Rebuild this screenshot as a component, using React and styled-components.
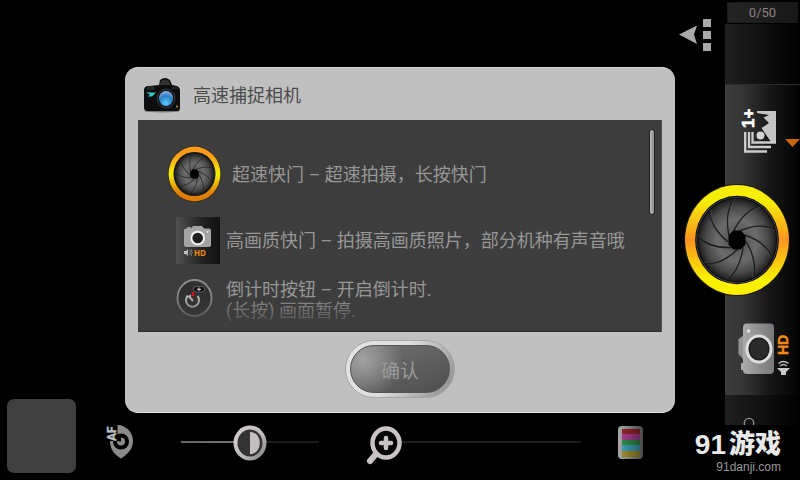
import React, { useState } from "react";
import styled, { createGlobalStyle } from "styled-components";

const GlobalStyle = createGlobalStyle`
  * {
    box-sizing: border-box;
  }

  body {
    margin: 0;
    background: #000;
    font-family: Roboto, "Noto Sans CJK SC", sans-serif;
  }

  svg {
    display: block;
  }
`;

const Page = styled.div`
  position: relative;
  display: flex;
  min-height: 100vh;
  background: #000;
  overflow: hidden;
`;

const Preview = styled.main`
  display: flex;
  flex: 1;
  flex-direction: column;
  justify-content: space-between;
  min-width: 0;
`;

const TopBar = styled.header`
  display: flex;
  justify-content: flex-end;
  padding: 18px 13px;
`;

const IconButton = styled.button`
  flex: none;
  padding: 0;
  border: 0;
  background: none;
  cursor: pointer;
`;

const BottomBar = styled.footer`
  display: flex;
  align-items: center;
  gap: 29px;
  padding: 0 82px 7px 7px;
`;

const Thumbnail = styled.button`
  flex: none;
  width: 69px;
  height: 74px;
  padding: 0;
  border: 0;
  border-radius: 7px;
  background: #404040;
`;

const Controls = styled.div`
  display: flex;
  flex: 1;
  align-items: center;
  gap: 48px;
  margin-top: 12px;
`;

const ZoomGroup = styled.div`
  display: flex;
  flex: 1;
  align-items: center;
  gap: 37px;
`;

const SliderBox = styled.div`
  position: relative;
  display: flex;
  align-items: center;
  flex: ${({ $fill }) => ($fill ? "1" : "0 1 138px")};
  height: 38px;

  svg {
    position: absolute;
    top: 0;
    transform: ${({ $fill }) => ($fill ? "none" : "translateX(-50%)")};
    pointer-events: none;
  }
`;

const Range = styled.input`
  appearance: none;
  width: 100%;
  height: 2px;
  margin: 0;
  background: ${({ $track }) => $track};

  &::-webkit-slider-thumb {
    appearance: none;
    width: 34px;
    height: 34px;
    background: transparent;
  }
`;

const Sidebar = styled.aside`
  display: flex;
  flex-direction: column;
  flex: none;
  width: 75px;
  padding-bottom: 55px;
`;

const Counter = styled.div`
  height: 21px;
  margin: 2px 2px 1px;
  border: 1px solid #1a1a1a;
  background: linear-gradient(90deg, #242424, #181818);
  color: #8d7f80;
  font-size: 13px;
  line-height: 19px;
  text-align: center;
`;

const Slot = styled.div`
  height: ${({ $height }) => $height}px;
  background: linear-gradient(90deg, #202020, #080808 75%, #000);
`;

const Tools = styled.div`
  display: flex;
  flex: 1;
  flex-direction: column;
  justify-content: center;
  gap: 27px;
  border-top: 1px solid #2c2c2c;
  background: linear-gradient(90deg, #3c3c3c, #353535 25%, #161616 60%, #0a0a0a 85%, #000);
`;

const ShutterButton = styled(IconButton)`
  width: 106px;
  margin-left: -41px;
`;

const Overlay = styled.div`
  position: absolute;
  inset: 0;
  display: flex;
  align-items: center;
  justify-content: center;
  padding: 0 16px;
  pointer-events: none;
`;

const DialogCard = styled.section`
  width: 100%;
  max-width: 550px;
  padding: 0 13px;
  border-top: 1px solid #d2d2d2;
  border-bottom: 1px solid #e0e0e0;
  border-radius: 13px;
  background: #c0c0c0;
  pointer-events: auto;
`;

const DialogHeader = styled.header`
  display: flex;
  align-items: center;
  gap: 12px;
  height: 52px;
  padding: 2px 5px 0;
`;

const Title = styled.h2`
  margin: 0;
  color: #4b4b4b;
  font-size: 18px;
  font-weight: 400;
  line-height: 21px;
`;

const DialogContent = styled.div`
  position: relative;
  display: flex;
  flex-direction: column;
  gap: 15px;
  padding: 26px 30px 10px;
  border-right: 1px solid #555;
  border-bottom: 1px solid #2c2c2c;
  background: #3d3d3d;
`;

const HelpRow = styled.div`
  display: flex;
  align-items: ${({ $top }) => ($top ? "flex-start" : "center")};
  gap: ${({ $large }) => ($large ? "11px" : "6px")};
  padding-left: ${({ $large }) => ($large ? "0" : "8px")};
`;

const HelpIcon = styled.div`
  flex: none;
  width: ${({ $large }) => ($large ? "53px" : "44px")};
`;

const HelpText = styled.p`
  margin: 0;
  color: #979797;
  font-size: 18px;
  font-weight: 400;
  line-height: 21px;
`;

const Fade = styled.div`
  position: absolute;
  right: 0;
  bottom: 0;
  left: 0;
  height: 36px;
  background: linear-gradient(rgba(61, 61, 61, 0), #3d3d3d);
`;

const ScrollThumb = styled.div`
  position: absolute;
  top: 9px;
  right: 6px;
  width: 6px;
  height: 86px;
  border: 1px solid #222;
  border-radius: 3px;
  background: linear-gradient(90deg, #bbb, #8c8c8c);
`;

const DialogFooter = styled.footer`
  display: flex;
  justify-content: center;
  padding: 8px 0 14px;
`;

const ConfirmRim = styled.div`
  padding: 4px;
  border: 1px solid #a6a6a6;
  border-radius: 29px;
  background: linear-gradient(120deg, #e4e4e4, #dedede 45%, #8a8a8a);
`;

const ConfirmButton = styled.button`
  display: block;
  width: 100px;
  height: 48px;
  padding: 0;
  border: 1px solid #555;
  border-radius: 24px;
  background: radial-gradient(circle at 12px 14px, #a2a2a2, rgba(120, 120, 120, 0) 40px),
    linear-gradient(160deg, #717171, #4e4e4e);
  color: #9a9a9a;
  font-family: inherit;
  font-size: 19px;
  font-weight: 400;
  cursor: pointer;
`;

const Watermark = styled.div`
  position: absolute;
  right: 19px;
  bottom: 6px;
  display: flex;
  flex-direction: column;
  align-items: flex-end;
  color: #e9e9e9;
`;

const Brand = styled.div`
  display: flex;
  align-items: center;
  gap: 3px;
  font-size: 26px;
  font-weight: 900;
  line-height: 31px;
`;

const BrandNumber = styled.span`
  font-family: "Liberation Sans", sans-serif;
  font-size: 28px;
  font-weight: 700;
`;

const Site = styled.div`
  color: #969696;
  font-family: "Liberation Sans", sans-serif;
  font-size: 12px;
  line-height: 14px;
`;

const BLADES = [0, 40, 80, 120, 160, 200, 240, 280, 320];

function Shutter({ id, width, height, edge, middle }) {
  return (
    <svg width={width} height={height} viewBox="-50 -50 100 100" preserveAspectRatio="none">
      <defs>
        <linearGradient id={`${id}-rim`} x1="0" y1="0" x2="0" y2="1">
          <stop offset="0" stopColor={edge[0]} />
          <stop offset="0.15" stopColor={edge[0]} />
          <stop offset="0.5" stopColor={middle} />
          <stop offset="0.85" stopColor={edge[1]} />
          <stop offset="1" stopColor={edge[1]} />
        </linearGradient>
        <radialGradient id={`${id}-blades`}>
          <stop offset="0" stopColor="#4a4a4a" />
          <stop offset="0.5" stopColor="#6c6c6c" />
          <stop offset="0.8" stopColor="#484848" />
          <stop offset="1" stopColor="#1c1c1c" />
        </radialGradient>
      </defs>
      <circle r="50" fill="#1c1812" />
      <circle r="49" fill={`url(#${id}-rim)`} />
      <circle r="39.5" fill="#050505" />
      <circle r="38.2" fill="none" stroke="#3c3d46" strokeWidth="1" />
      <circle r="37" fill={`url(#${id}-blades)`} />
      {BLADES.map((angle) => (
        <g key={angle} transform={`rotate(${angle})`} fill="none">
          <path d="M-7.500 -4Q-12 -24 -3 -37" stroke="#1f1f1f" strokeWidth="1.3" />
          <path d="M-6 -5Q-10.600 -24 -1.600 -37" stroke="#777" strokeWidth="0.6" opacity="0.35" />
        </g>
      ))}
      <path d="M-3.500 -8.500H3.500L8 -4V4L3.500 8.500H-3.500L-8 4V-4Z" fill="#000" />
    </svg>
  );
}

function BackIcon() {
  return (
    <svg width="33" height="33" viewBox="679 18 33 33" fill="#a9a9a9">
      <path d="M679 34.500L697 25.500L694 34.500L697 44Z" />
      <path d="M703 19h8v8h-8zM703 31h8v8h-8zM703 43h8v8h-8z" />
    </svg>
  );
}

function FocusIcon() {
  return (
    <svg width="28" height="34" viewBox="105 424 28 34">
      <path d="M120 424C129 427 133 433 133 440C133 448 128 453 121 457.500C115 454 110 449 110 440H117V424Z" fill="#8b8b8b" />
      <circle cx="121" cy="440.500" r="8" fill="#000" />
      <path d="M105 424h12.500v16h-12.500z" fill="#000" />
      <circle cx="121" cy="440.500" r="4" fill="#8b8b8b" />
      <path d="M121 440.500L116 440L117 434L121 436Z" fill="#000" />
      <text
        transform="translate(116 440) rotate(-90)"
        fill="#bdbdbd"
        stroke="#bdbdbd"
        strokeWidth="0.4"
        fontSize="12"
        fontWeight="700"
        fontFamily="Roboto, sans-serif"
      >
        AF
      </text>
    </svg>
  );
}

function ContrastIcon(props) {
  return (
    <svg {...props} width="34" height="38" viewBox="-17 -19 34 38">
      <defs>
        <linearGradient id="contrast-rim" x1="0" y1="0" x2="1" y2="1">
          <stop offset="0" stopColor="#d8d3d3" />
          <stop offset="0.6" stopColor="#bdb8b8" />
          <stop offset="1" stopColor="#777" />
        </linearGradient>
      </defs>
      <ellipse cy="1" rx="16.500" ry="17.500" fill="url(#contrast-rim)" />
      <ellipse cy="1" rx="12.500" ry="13.500" fill="#333" />
      <path d="M0 -10C13 -10 13 12 0 12Z" fill="#c4bfbf" />
    </svg>
  );
}

function ZoomIcon() {
  return (
    <svg width="38" height="42" viewBox="367 423 38 42" fill="none" stroke="#c9c3c3">
      <path d="M376 454L370 461" strokeWidth="6" strokeLinecap="round" />
      <ellipse cx="386" cy="443" rx="13.500" ry="14.500" fill="#050505" strokeWidth="4.500" />
      <path d="M386 438V448M381 443H391" strokeWidth="4.500" strokeLinecap="round" />
    </svg>
  );
}

function ColorIcon() {
  return (
    <svg width="25" height="33" viewBox="0 0 25 33">
      <defs>
        <linearGradient id="color-frame">
          <stop offset="0" stopColor="#aaa" />
          <stop offset="1" stopColor="#484848" />
        </linearGradient>
        <linearGradient id="color-shade">
          <stop offset="0" stopColor="#000" stopOpacity="0" />
          <stop offset="1" stopColor="#000" stopOpacity="0.35" />
        </linearGradient>
      </defs>
      <rect width="25" height="33" rx="4" fill="url(#color-frame)" />
      <path d="M4 3h18v5H4z" fill="#8e2329" />
      <path d="M4 8h18v6H4z" fill="#a33a8b" />
      <path d="M4 14h18v5H4z" fill="#2b8a42" />
      <path d="M4 19h18v6H4z" fill="#3a9ab0" />
      <path d="M4 25h18v6H4z" fill="#9a8a2d" />
      <path d="M4 3h18v28H4z" fill="url(#color-shade)" />
    </svg>
  );
}

function BurstIcon() {
  return (
    <svg width="75" height="52" viewBox="725 105 75 52">
      <path d="M757 111H776V142H771L761.500 128L769 123L763.500 117.500L769 115L757 113Z" fill="#c4c4c4" />
      <circle cx="760.500" cy="135.500" r="4" fill="#d5d5d5" />
      <g fill="none" stroke="#ccc" strokeWidth="2.300">
        <path d="M752.500 132V142.500H776" />
        <path d="M749 132V147H771" />
        <path d="M745.200 132V151.500H767" />
      </g>
      <text
        transform="translate(754 128) rotate(-90)"
        fill="#fff"
        stroke="#fff"
        strokeWidth="0.600"
        fontSize="17"
        fontWeight="700"
        fontFamily="Liberation Sans, sans-serif"
      >
        1+
      </text>
      <path d="M785 139H800L792.500 147Z" fill="#c8640c" />
    </svg>
  );
}

function QualityIcon() {
  return (
    <svg width="75" height="52" viewBox="725 322 75 52">
      <defs>
        <linearGradient id="quality-body">
          <stop offset="0" stopColor="#aaa" />
          <stop offset="1" stopColor="#777" />
        </linearGradient>
      </defs>
      <path d="M744 334L738.500 338V353L744 359Z" fill="#949494" />
      <rect x="741" y="362" width="4" height="7" fill="#aaa" />
      <rect x="743" y="322.500" width="31" height="50.500" rx="4" fill="url(#quality-body)" />
      <circle cx="748.500" cy="330" r="1.700" fill="#e4e4e4" />
      <ellipse cx="759" cy="348" rx="12" ry="13" fill="#1d1d1d" stroke="#dedede" strokeWidth="3" />
      <ellipse cx="759" cy="348" rx="9" ry="10" fill="#2a2a2a" />
      <text
        transform="translate(788 354) rotate(-90)"
        fill="#f78b12"
        stroke="#f78b12"
        strokeWidth="0.400"
        fontSize="14"
        fontWeight="700"
        fontFamily="Liberation Sans, sans-serif"
      >
        HD
      </text>
      <path d="M777 367H790L786 371V374H781V371Z" fill="#c9c9c9" />
      <path d="M780 365Q783.500 362 787 365M778.500 362.500Q783.500 358.500 788.500 362.500" fill="none" stroke="#bbb" strokeWidth="1.300" />
    </svg>
  );
}

function MoreIcon() {
  return (
    <svg width="75" height="30" viewBox="725 395 75 30">
      <circle cx="749" cy="423" r="4.700" fill="none" stroke="#909090" strokeWidth="1.300" />
    </svg>
  );
}

function AppIcon() {
  return (
    <svg width="38" height="36" viewBox="143 77 38 36">
      <defs>
        <radialGradient id="app-lens" cx="0.5" cy="0.8" r="0.8">
          <stop offset="0" stopColor="#5cc8ff" />
          <stop offset="0.6" stopColor="#2c7fc4" />
          <stop offset="1" stopColor="#8fb9dd" />
        </radialGradient>
      </defs>
      <ellipse cx="162" cy="111" rx="18" ry="1.500" fill="#777" />
      <path d="M144 90Q144 86 149 86L159 85L160 80Q165 76 170 80L172 85L177 86Q180 87 180 91V108Q180 111 177 111H147Q144 111 144 107Z" fill="#0b0d0f" />
      <path d="M161 81Q165 78 169 81L170 85H160Z" fill="#333" />
      <path d="M147 89H154L153 87H149ZM172 88H178" stroke="#3d4145" fill="none" />
      <path d="M146 92.500L156 92.500L152 96.500H148L150 94.500Z" fill="#35c8cc" />
      <ellipse cx="166" cy="98.500" rx="9" ry="9.500" fill="#17191c" stroke="#34383c" />
      <ellipse cx="166" cy="98.500" rx="7" ry="7.500" fill="url(#app-lens)" />
      <path d="M176 105.500h2v2h-2z" fill="#a77a13" />
    </svg>
  );
}

function QualityTile() {
  return (
    <svg width="44" height="47" viewBox="176 218 44 47">
      <defs>
        <linearGradient id="tile-bg">
          <stop offset="0" stopColor="#505050" />
          <stop offset="0.6" stopColor="#222" />
          <stop offset="1" stopColor="#101010" />
        </linearGradient>
      </defs>
      <path d="M176 218h44v47h-44z" fill="url(#tile-bg)" />
      <path d="M184 231Q184 229.500 186 229.500H191L193 227H202L204 229.500H209Q211 229.500 211 231.500V246Q211 248 209 248H186Q184 248 184 246Z" fill="#a3a3a3" />
      <path d="M187 228h4v2h-4z" fill="#999" />
      <circle cx="197.700" cy="239" r="6.300" fill="#1f1f1f" stroke="#f2f2f2" strokeWidth="2" />
      <circle cx="207.500" cy="233" r="1" fill="#eee" />
      <path d="M184 252H186L188 250V257L186 255H184Z" fill="#bbb" />
      <path d="M189.500 251Q191 253.500 189.500 256M191 250Q193 253.500 191 257" fill="none" stroke="#777" />
      <text x="194" y="257" fill="#f78b12" fontSize="8" fontWeight="700" fontFamily="Open Sans, sans-serif">
        HD
      </text>
    </svg>
  );
}

function TimerIcon() {
  return (
    <svg width="38" height="40" viewBox="176 279 38 40" fill="none">
      <ellipse cx="194.500" cy="298" rx="17" ry="18" fill="#303030" stroke="#8c8c8c" strokeWidth="1.800" />
      <path d="M188 295.500A6.500 6.500 0 1 0 197.500 296" stroke="#b8b8b8" strokeWidth="2" />
      <path d="M189.500 297L193 301" stroke="#b8b8b8" strokeWidth="2" />
      <path d="M186 297L191 294.500L191 298Z" fill="#b8b8b8" />
      <path d="M193 292V296" stroke="#e01010" strokeWidth="2.400" />
      <rect x="193.500" y="286.500" width="11" height="5.500" rx="2.500" fill="#111" stroke="#777" strokeWidth="0.700" />
      <path d="M197 289.300H201M199 287.500V291" stroke="#bbb" strokeWidth="1.200" />
    </svg>
  );
}

function HelpDialog({ onConfirm }) {
  return (
    <Overlay>
      <DialogCard role="dialog" aria-labelledby="dialog-title">
        <DialogHeader>
          <AppIcon />
          <Title id="dialog-title">高速捕捉相机</Title>
        </DialogHeader>
        <DialogContent>
          <HelpRow $large>
            <HelpIcon $large>
              <Shutter id="small" width="53" height="56" edge={["#f99a1c", "#e07c08"]} middle="#f4f000" />
            </HelpIcon>
            <HelpText>超速快门 – 超速拍摄，长按快门</HelpText>
          </HelpRow>
          <HelpRow>
            <HelpIcon>
              <QualityTile />
            </HelpIcon>
            <HelpText>高画质快门 – 拍摄高画质照片，部分机种有声音哦</HelpText>
          </HelpRow>
          <HelpRow $top>
            <HelpIcon>
              <TimerIcon />
            </HelpIcon>
            <HelpText>
              倒计时按钮 – 开启倒计时.
              <br />
              (长按) 画面暂停.
            </HelpText>
          </HelpRow>
          <Fade />
          <ScrollThumb />
        </DialogContent>
        <DialogFooter>
          <ConfirmRim>
            <ConfirmButton onClick={onConfirm}>确认</ConfirmButton>
          </ConfirmRim>
        </DialogFooter>
      </DialogCard>
    </Overlay>
  );
}

function App() {
  const [open, setOpen] = useState(true);
  const [contrast, setContrast] = useState(50);
  const [zoom, setZoom] = useState(0);

  return (
    <Page>
      <GlobalStyle />
      <Preview>
        <TopBar>
          <IconButton aria-label="返回">
            <BackIcon />
          </IconButton>
        </TopBar>
        <BottomBar>
          <Thumbnail aria-label="相册" />
          <Controls>
            <IconButton aria-label="自动对焦">
              <FocusIcon />
            </IconButton>
            <SliderBox>
              <Range
                type="range"
                aria-label="曝光"
                value={contrast}
                onChange={(e) => setContrast(Number(e.target.value))}
                $track="linear-gradient(90deg, #666, #777 50%, #1c1c1c 50%)"
              />
              <ContrastIcon style={{ left: `${contrast}%` }} />
            </SliderBox>
            <ZoomGroup>
              <SliderBox $fill>
                <Range
                  type="range"
                  aria-label="变焦"
                  value={zoom}
                  onChange={(e) => setZoom(Number(e.target.value))}
                  $track="linear-gradient(90deg, transparent 20px, #1e1e1e 20px)"
                />
                <ZoomIcon />
              </SliderBox>
              <IconButton aria-label="色彩">
                <ColorIcon />
              </IconButton>
            </ZoomGroup>
          </Controls>
        </BottomBar>
      </Preview>

      <Sidebar>
        <Counter>0/50</Counter>
        <Slot $height={60} />
        <Tools>
          <IconButton aria-label="连拍">
            <BurstIcon />
          </IconButton>
          <ShutterButton aria-label="快门">
            <Shutter id="large" width="106" height="112" edge={["#f6ee08", "#fbf000"]} middle="#fb9422" />
          </ShutterButton>
          <IconButton aria-label="高画质快门">
            <QualityIcon />
          </IconButton>
        </Tools>
        <Slot $height={30}>
          <MoreIcon />
        </Slot>
      </Sidebar>

      {open && <HelpDialog onConfirm={() => setOpen(false)} />}

      <Watermark>
        <Brand>
          <BrandNumber>91</BrandNumber>
          游戏
        </Brand>
        <Site>91danji.com</Site>
      </Watermark>
    </Page>
  );
}

export default App;
